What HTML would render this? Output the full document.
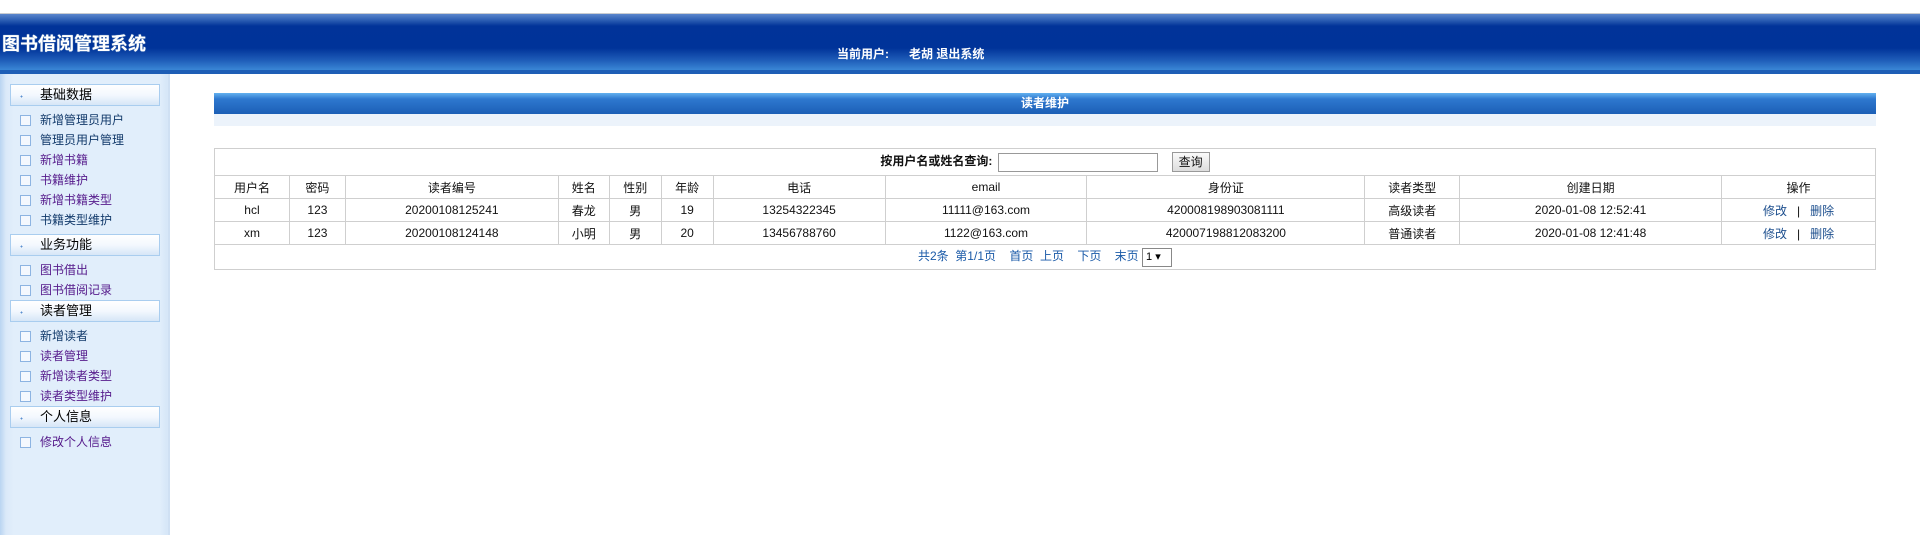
<!DOCTYPE html>
<html><head><meta charset="utf-8"><style>
*{margin:0;padding:0;box-sizing:border-box}
body{width:1920px;height:535px;overflow:hidden;background:#fff;font-family:"Liberation Sans","Noto Sans CJK SC",sans-serif;font-size:12px;position:relative}
.chrome{position:absolute;left:0;top:0;width:1920px;height:14px;background:#fff;border-bottom:1px solid #c9ccd1}
.hdr{position:absolute;left:0;top:14px;width:1920px;height:60px;background:linear-gradient(#5b86cc 0,#2d5fb4 6px,#013399 12px,#003399 34px,#1e5cb8 46px,#3a86d6 56px,#1e5eb6 56px,#1e5eb6 60px)}
.hdr .t{position:absolute;left:2px;top:16px;color:#fff;font-size:18px;font-weight:bold;letter-spacing:0px;text-shadow:0 0 1px #9bc}
.hdr .u{position:absolute;left:837px;top:31px;color:#fff;font-size:12px;font-weight:bold}
.side{position:absolute;left:0;top:74px;width:170px;height:461px;background:linear-gradient(90deg,#b9d4f1 0,#dbe9f9 6px,#e1eefb 14px,#e1eefb 160px,#d7e7f8 166px);border-right:2px solid #cfe0f3}
.sec{position:absolute;left:10px;width:150px;height:22px;border:1px solid #a9cdef;background:linear-gradient(#fff 0,#f3f8fe 50%,#d6e6f7 100%);color:#000;font-size:13px;line-height:20px;padding-left:29px}
.sec:before{content:"";position:absolute;left:8px;top:9px;width:5px;height:5px;background:radial-gradient(circle,#5a8fd0 1px,transparent 1px);}
.it{position:absolute;left:40px;font-size:12px;line-height:14px;color:#551a8b}
.it.n{color:#123a6b}
.it:before{content:"";position:absolute;left:-20px;top:2px;width:9px;height:9px;border:1px solid #8db4e2;background:#f4f8fe}
.tb{position:absolute;left:214px;top:93px;width:1662px;height:21px;background:linear-gradient(#63b1ef 0,#2e78cf 6px,#1c5fb6 100%);color:#fff;font-weight:bold;text-align:center;line-height:21px;font-size:12px}
.ls{position:absolute;left:214px;top:114px;width:1662px;height:12px;background:#ecf3fb}
table{position:absolute;left:214px;top:148px;width:1662px;border-collapse:collapse}
td{border:1px solid #cfcfcf;text-align:center;height:23px;font-size:12px;color:#111}
.srch td{height:27px;font-weight:bold}
input.i{width:160px;height:19px;border:1px solid #999;vertical-align:middle;margin-left:2px}
.btn{display:inline-block;border:1px solid #999;background:linear-gradient(#fafafa,#ddd);height:20px;line-height:18px;padding:0 6px;font-weight:normal;vertical-align:middle;margin-left:14px}
.pg td{height:25px;color:#1a5aa8}
a{color:#1d4f8e;text-decoration:none}
.sel{display:inline-block;border:1px solid #888;width:30px;height:19px;line-height:17px;color:#000;text-align:left;padding-left:3px;vertical-align:middle;font-size:11px}
</style></head><body>
<div class="chrome"></div>
<div class="hdr"><div class="t">图书借阅管理系统</div><div class="u">当前用户:&nbsp;&nbsp;&nbsp;&nbsp;&nbsp;&nbsp;老胡 退出系统</div></div>
<div class="side">
<div class="sec" style="top:10px">基础数据</div>
<div class="it n" style="top:39px">新增管理员用户</div>
<div class="it n" style="top:59px">管理员用户管理</div>
<div class="it" style="top:79px">新增书籍</div>
<div class="it" style="top:99px">书籍维护</div>
<div class="it" style="top:119px">新增书籍类型</div>
<div class="it n" style="top:139px">书籍类型维护</div>
<div class="sec" style="top:160px">业务功能</div>
<div class="it" style="top:189px">图书借出</div>
<div class="it" style="top:209px">图书借阅记录</div>
<div class="sec" style="top:226px">读者管理</div>
<div class="it n" style="top:255px">新增读者</div>
<div class="it" style="top:275px">读者管理</div>
<div class="it" style="top:295px">新增读者类型</div>
<div class="it" style="top:315px">读者类型维护</div>
<div class="sec" style="top:332px">个人信息</div>
<div class="it" style="top:361px">修改个人信息</div>
</div>
<div class="tb">读者维护</div>
<div class="ls"></div>
<table>
<colgroup><col style="width:75px"><col style="width:56px"><col style="width:213px"><col style="width:51px"><col style="width:52px"><col style="width:52px"><col style="width:172px"><col style="width:202px"><col style="width:278px"><col style="width:95px"><col style="width:262px"><col style="width:154px"></colgroup>
<tr class="srch"><td colspan="12">按用户名或姓名查询: <input class="i"><span class="btn">查询</span></td></tr>
<tr><td>用户名</td><td>密码</td><td>读者编号</td><td>姓名</td><td>性别</td><td>年龄</td><td>电话</td><td>email</td><td>身份证</td><td>读者类型</td><td>创建日期</td><td>操作</td></tr>
<tr><td>hcl</td><td>123</td><td>20200108125241</td><td>春龙</td><td>男</td><td>19</td><td>13254322345</td><td>11111@163.com</td><td>420008198903081111</td><td>高级读者</td><td>2020-01-08 12:52:41</td><td><a>修改</a> &nbsp; | &nbsp; <a>删除</a></td></tr>
<tr><td>xm</td><td>123</td><td>20200108124148</td><td>小明</td><td>男</td><td>20</td><td>13456788760</td><td>1122@163.com</td><td>420007198812083200</td><td>普通读者</td><td>2020-01-08 12:41:48</td><td><a>修改</a> &nbsp; | &nbsp; <a>删除</a></td></tr>
<tr class="pg"><td colspan="12">共2条 &nbsp;第1/1页 &nbsp; &nbsp;首页 &nbsp;上页 &nbsp; &nbsp;下页 &nbsp; &nbsp;末页 <span class="sel">1 ▾</span></td></tr>
</table>
</body></html>
